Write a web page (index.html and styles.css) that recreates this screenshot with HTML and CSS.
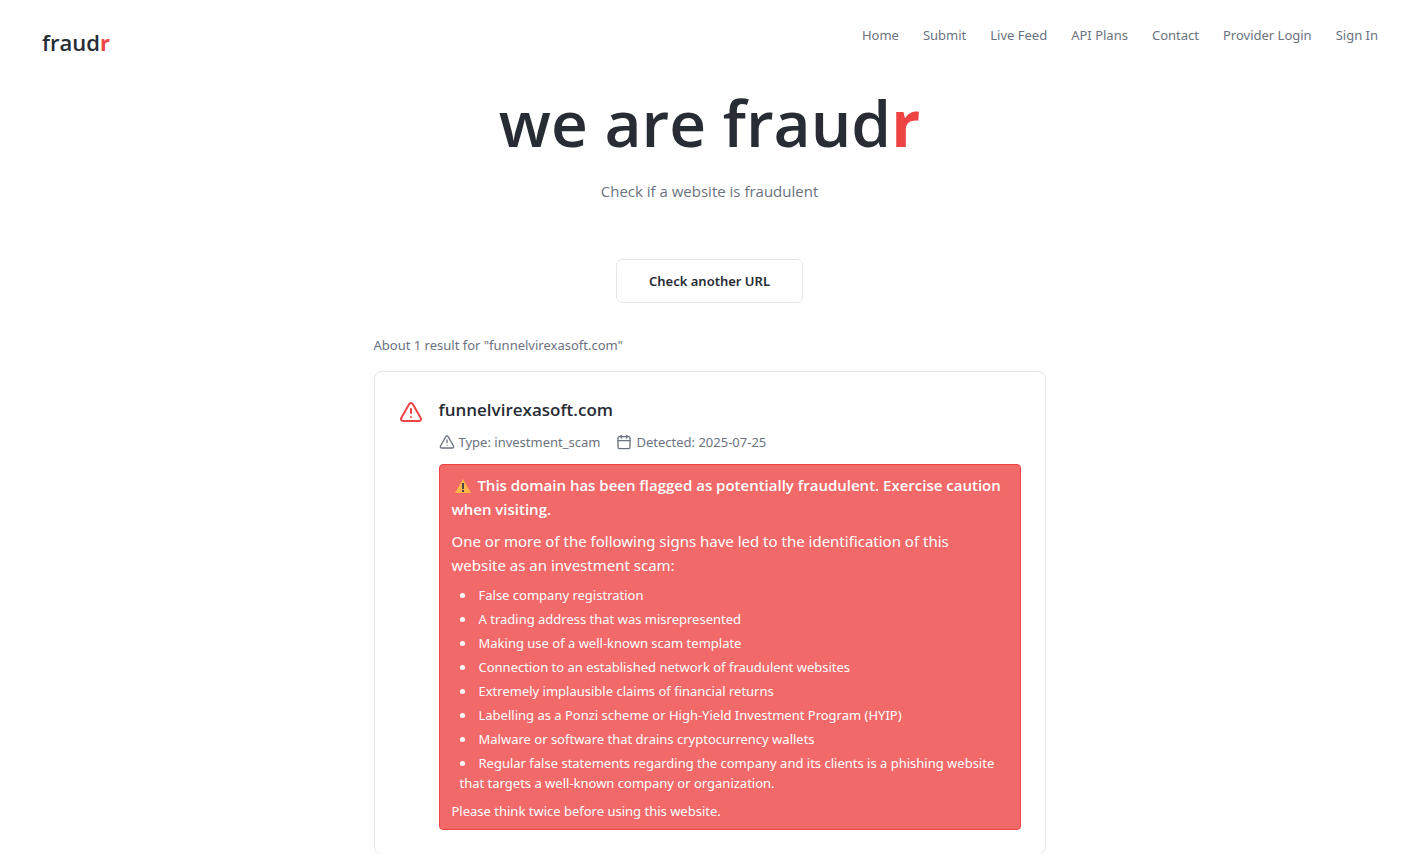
FILE: index.html
```html
<!DOCTYPE html>
<html lang="en">
<head>
  <meta charset="UTF-8" />
  <meta name="viewport" content="width=device-width, initial-scale=1.0" />
  <title>fraudr</title>
  <link rel="stylesheet" href="styles.css">
</head>
<body>

<header class="header">
  <a href="#" class="logo">fraud<span class="red">r</span></a>
  <nav class="nav">
    <a href="#">Home</a>
    <a href="#">Submit</a>
    <a href="#">Live Feed</a>
    <a href="#">API Plans</a>
    <a href="#">Contact</a>
    <a href="#">Provider Login</a>
    <a href="#">Sign In</a>
  </nav>
</header>

<main class="main">
  <h1>we are fraud<span class="red">r</span></h1>
  <p class="subtitle">Check if a website is fraudulent</p>

  <button type="button" class="check-button">Check another URL</button>

  <section class="results">
    <p class="count">About 1 result for "funnelvirexasoft.com"</p>

    <article class="card">
      <svg class="card-icon" viewBox="0 0 24 24" aria-hidden="true">
        <path d="m21.73 18-8-14a2 2 0 0 0-3.48 0l-8 14A2 2 0 0 0 4 21h16a2 2 0 0 0 1.73-3Z" />
        <path d="M12 9v4" />
        <path d="M12 17h.01" />
      </svg>

      <div class="card-body">
        <h2>funnelvirexasoft.com</h2>

        <div class="meta">
          <span class="meta-item">
            <svg viewBox="0 0 24 24" aria-hidden="true">
              <path d="m21.73 18-8-14a2 2 0 0 0-3.48 0l-8 14A2 2 0 0 0 4 21h16a2 2 0 0 0 1.73-3Z" />
              <path d="M12 9v4" />
              <path d="M12 17h.01" />
            </svg>
            Type: investment_scam
          </span>
          <span class="meta-item">
            <svg viewBox="0 0 24 24" aria-hidden="true">
              <path d="M8 2v4" />
              <path d="M16 2v4" />
              <rect width="18" height="18" x="3" y="4" rx="2" />
              <path d="M3 10h18" />
            </svg>
            Detected: 2025-07-25
          </span>
        </div>

        <div class="alert">
          <p class="alert-title">
            <svg class="warning" viewBox="0 0 16 16" aria-hidden="true">
              <path fill="#ffb54a" d="M8 1 16 15H0Z" />
              <path fill="#4a4645" d="M7 5h2v6H7zM7 12h2v2H7z" />
            </svg>
            This domain has been flagged as potentially fraudulent. Exercise caution when visiting.
          </p>
          <p class="alert-intro">One or more of the following signs have led to the identification of this website as an investment scam:</p>
          <ul>
            <li>False company registration</li>
            <li>A trading address that was misrepresented</li>
            <li>Making use of a well-known scam template</li>
            <li>Connection to an established network of fraudulent websites</li>
            <li>Extremely implausible claims of financial returns</li>
            <li>Labelling as a Ponzi scheme or High-Yield Investment Program (HYIP)</li>
            <li>Malware or software that drains cryptocurrency wallets</li>
            <li>Regular false statements regarding the company and its clients is a phishing website that targets a well-known company or organization.</li>
          </ul>
          <p class="alert-note">Please think twice before using this website.</p>
        </div>
      </div>
    </article>
  </section>
</main>

</body>
</html>
```
FILE: styles.css
```css
* {
  box-sizing: border-box;
}
body {
  font-family: 'Segoe UI', 'Open Sans', sans-serif;
  background: #fff;
  margin: 0;
  color: #282c35;
  font-size: 15px;
  line-height: 24px;
}
h1, h2, p, ul {
  margin: 0;
  padding: 0;
}
a {
  color: inherit;
  text-decoration: none;
}
.red {
  color: #ef4444;
  font-weight: bold;
}
.nav, .check-button, .count, .meta, .alert ul, .alert-note {
  font-family: 'Segoe UI', 'Noto Sans', sans-serif;
  font-size: 13px;
  line-height: 20px;
}
.header {
  display: flex;
  justify-content: space-between;
  align-items: flex-start;
  padding: 25px 29px 0 42px;
}
.logo {
  font-size: 22px;
  font-weight: 600;
  line-height: 34px;
}
.nav {
  display: flex;
  gap: 24px;
  color: #6b7280;
}
.nav a:hover {
  color: #282c35;
}
.main {
  display: flex;
  flex-direction: column;
  align-items: center;
  padding: 28px 0 24px 12px;
}
h1 {
  font-size: 64px;
  font-weight: 600;
  line-height: 72px;
}
.subtitle {
  margin-top: 20px;
  color: #6b7280;
}
.check-button {
  margin-top: 56px;
  padding: 11px 32px;
  background: #fff;
  border: 1px solid #e5e7eb;
  border-radius: 6px;
  color: #282c35;
  font-weight: 600;
  cursor: pointer;
}
.check-button:hover {
  background: #f9fafb;
}
.results {
  width: 100%;
  max-width: 672px;
  margin-top: 32px;
}
.count {
  margin-bottom: 16px;
  color: #6b7280;
}
.card {
  display: flex;
  align-items: flex-start;
  gap: 16px;
  padding: 24px;
  border: 1px solid #e5e7eb;
  border-radius: 8px;
}
.card svg {
  fill: none;
  stroke: currentColor;
  stroke-width: 2;
  stroke-linecap: round;
  stroke-linejoin: round;
  flex-shrink: 0;
}
.card .card-icon {
  width: 24px;
  height: 24px;
  margin-top: 4px;
  color: #ef4444;
}
.card-body {
  flex: 1;
  min-width: 0;
}
h2 {
  font-size: 17px;
  font-weight: 600;
  line-height: 28px;
}
.meta {
  display: flex;
  gap: 16px;
  margin: 8px 0 12px;
  color: #6b7280;
}
.meta-item {
  display: flex;
  align-items: center;
  gap: 4px;
}
.meta-item svg {
  width: 16px;
  height: 16px;
}
.alert {
  display: flex;
  flex-direction: column;
  gap: 8px;
  padding: 8px 12px;
  background: #f26969;
  border: 1px solid #ef4444;
  border-radius: 4px;
  color: #fff;
}
.alert-title {
  font-weight: 600;
}
.card .warning {
  width: 16px;
  height: 16px;
  margin: 0 3px;
  vertical-align: -3px;
  stroke: none;
}
.alert-intro {
  padding-right: 16px;
  font-family: 'Segoe UI', 'Noto Sans', sans-serif;
}
.alert ul {
  display: flex;
  flex-direction: column;
  gap: 4px;
  padding-left: 8px;
  list-style-position: inside;
}
```
